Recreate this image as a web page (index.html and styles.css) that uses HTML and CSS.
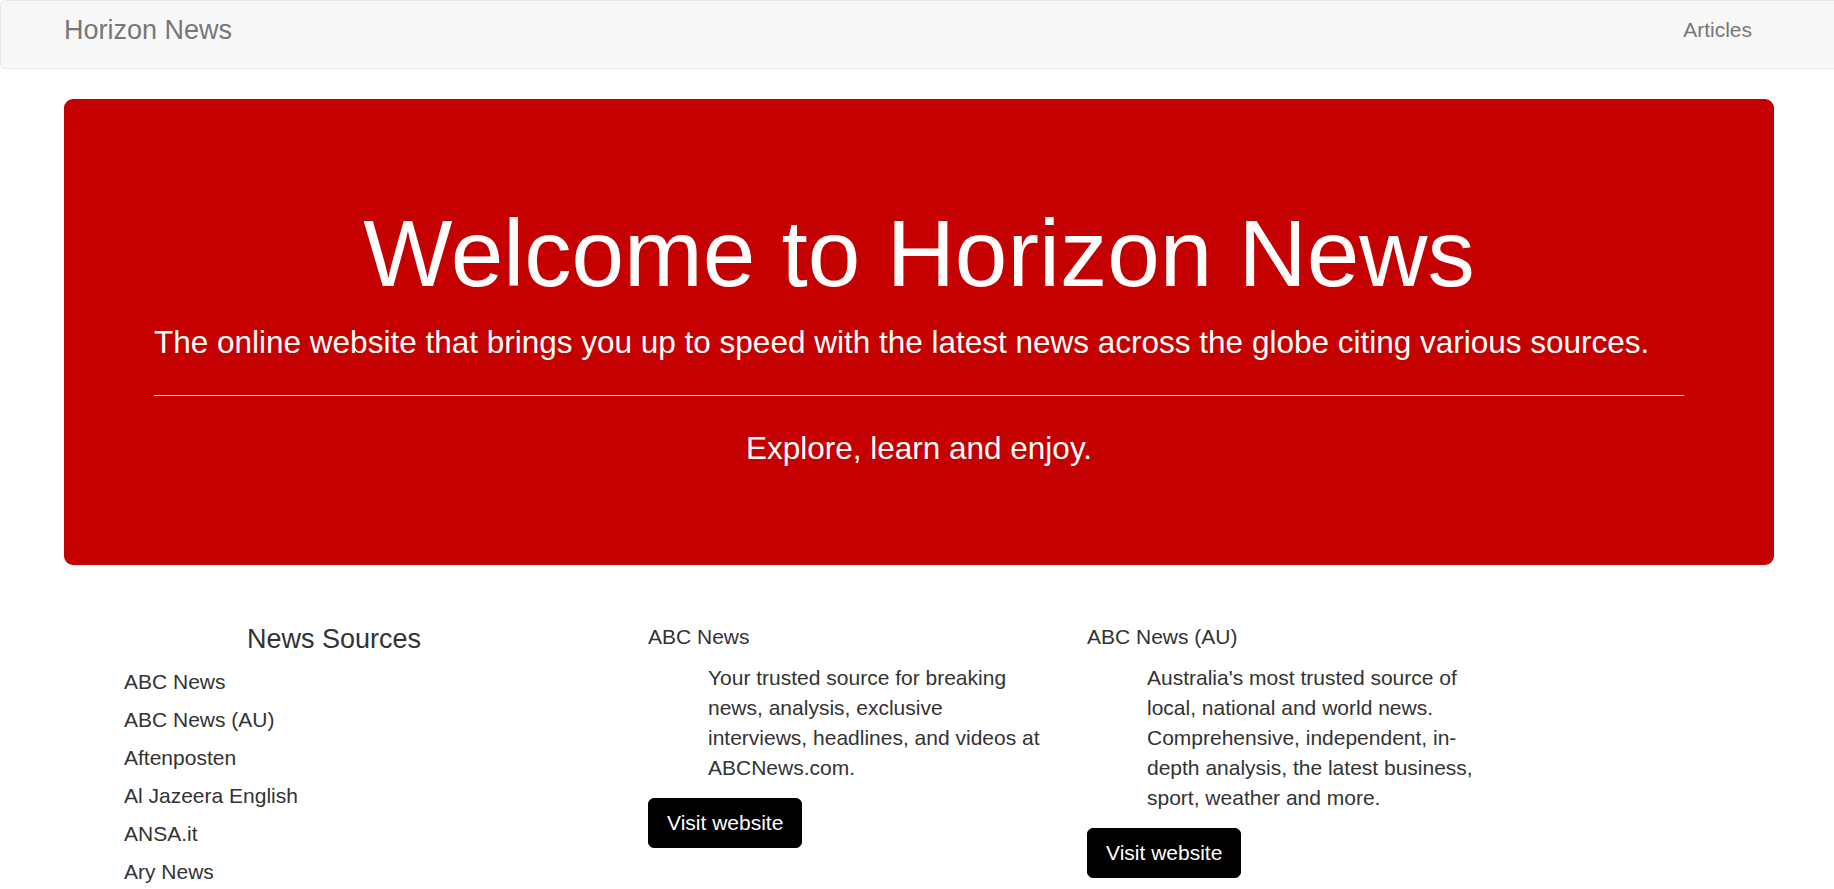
FILE: index.html
```html
<!DOCTYPE html>
<html lang="en">
<head>
<meta charset="utf-8">
<title>Horizon News</title>
<link rel="stylesheet" href="styles.css">
</head>
<body>
<nav class="navbar">
  <div class="navbar-inner">
    <a class="brand" href="#">Horizon News</a>
    <ul class="nav-links">
      <li><a href="#">Articles</a></li>
    </ul>
  </div>
</nav>

<main class="container">
  <section class="jumbotron">
    <h1 class="jumbo-title">Welcome to Horizon News</h1>
    <p class="lead">The online website that brings you up to speed with the latest news across the globe citing various sources.</p>
    <hr class="divider">
    <p class="lead lead-center">Explore, learn and enjoy.</p>
  </section>

  <section class="content-row">
    <div class="sources">
      <h4 class="sources-title">News Sources</h4>
      <ul class="sources-list">
        <li>ABC News</li>
        <li>ABC News (AU)</li>
        <li>Aftenposten</li>
        <li>Al Jazeera English</li>
        <li>ANSA.it</li>
        <li>Ary News</li>
      </ul>
    </div>

    <div class="card">
      <h5 class="card-title">ABC News</h5>
      <p class="card-desc">Your trusted source for breaking news, analysis, exclusive interviews, headlines, and videos at ABCNews.com.</p>
      <a class="btn" href="#">Visit website</a>
    </div>

    <div class="card">
      <h5 class="card-title">ABC News (AU)</h5>
      <p class="card-desc">Australia's most trusted source of local, national and world news. Comprehensive, independent, in-depth analysis, the latest business, sport, weather and more.</p>
      <a class="btn" href="#">Visit website</a>
    </div>
  </section>
</main>
</body>
</html>
```

FILE: styles.css
```css
* {
  box-sizing: border-box;
}

html, body {
  margin: 0;
  padding: 0;
}

body {
  font-family: "Liberation Sans", Arial, Helvetica, sans-serif;
  font-size: 21px;
  line-height: 30px;
  color: #333333;
  background: #ffffff;
}

a {
  text-decoration: none;
}

/* Navbar */
.navbar {
  height: 69px;
  background: #f8f8f8;
  border: 1px solid #e7e7e7;
  border-right: 0;
  border-radius: 6px 0 0 6px;
  margin-bottom: 30px;
}

.navbar-inner {
  display: flex;
  justify-content: space-between;
  align-items: flex-start;
  padding: 14px 61px 0 63px;
}

.brand {
  font-size: 27px;
  line-height: 30px;
  color: #777777;
}

.nav-links {
  list-style: none;
  margin: 0;
  padding: 0;
}

.nav-links a {
  display: block;
  font-size: 21px;
  line-height: 30px;
  color: #777777;
  padding: 0 21px 0 22px;
}

/* Container */
.container {
  width: 1710px;
  margin-left: 64px;
}

/* Jumbotron */
.jumbotron {
  background: #c40000;
  color: #ffffff;
  border-radius: 9px;
  padding: 72px 90px 71px;
  margin-bottom: 45px;
}

.jumbo-title {
  font-size: 94.5px;
  line-height: 104px;
  font-weight: 500;
  margin: 30px 0 15px;
  text-align: center;
}

.lead {
  font-size: 31.5px;
  line-height: 45px;
  font-weight: 200;
  margin: 0 0 22.5px;
}

.lead-center {
  text-align: center;
}

.divider {
  height: 0;
  border: 0;
  border-top: 1px solid #eeeeee;
  margin: 30px 0;
}

/* Content */
.content-row {
  display: flex;
  align-items: flex-start;
  gap: 44px;
}

.sources {
  width: 540px;
}

.sources-title {
  font-size: 27px;
  line-height: 29.7px;
  font-weight: 500;
  margin: 15px 0 13px;
  text-align: center;
}

.sources-list {
  list-style: none;
  margin: 0;
  padding: 0 0 0 60px;
}

.sources-list li {
  line-height: 30px;
  margin-bottom: 8px;
}

.card {
  width: 395px;
}

.card-title {
  font-size: 21px;
  line-height: 23.1px;
  font-weight: 500;
  margin: 15px 0;
}

.card-desc {
  margin: 0 0 15px 60px;
}

.btn {
  display: inline-block;
  background: #000000;
  color: #ffffff;
  border: 1px solid #000000;
  border-radius: 6px;
  padding: 9px 18px;
  font-size: 21px;
  line-height: 30px;
}
```
